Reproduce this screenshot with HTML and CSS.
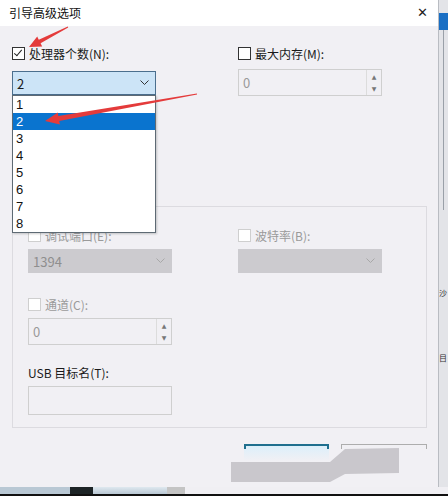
FILE: index.html
```html
<!DOCTYPE html>
<html lang="zh-CN">
<head>
    <meta charset="UTF-8">
    <title>引导高级选项</title>
    <link rel="stylesheet" href="styles.css">
</head>
<body>
    <div class="screen">
        <div class="dialog">
            <div class="titlebar">
                <span class="title">引导高级选项</span>
                <span class="close">✕</span>
            </div>

            <div class="dialog-body">
                <div class="top-row">
                    <div class="field">
                        <label class="check-label"><span class="box checked"></span>处理器个数(N):</label>
                        <div class="select-wrap">
                            <div class="select open">
                                <span>2</span>
                                <svg class="chevron" width="9" height="6" viewBox="0 0 9 6"><path d="M0.5 0.5 L4.5 4.5 L8.5 0.5" fill="none" stroke="#333" stroke-width="1"/></svg>
                            </div>
                            <ul class="dropdown">
                                <li>1</li>
                                <li class="active">2</li>
                                <li>3</li>
                                <li>4</li>
                                <li>5</li>
                                <li>6</li>
                                <li>7</li>
                                <li>8</li>
                            </ul>
                        </div>
                    </div>
                    <div class="field">
                        <label class="check-label"><span class="box"></span>最大内存(M):</label>
                        <div class="spin spin-top">
                            <span class="spin-value">0</span>
                            <div class="spin-btns">
                                <span>▲</span>
                                <span>▼</span>
                            </div>
                        </div>
                    </div>
                </div>

                <div class="group">
                    <div class="group-grid">
                        <div class="field">
                            <label class="check-label muted"><span class="box off"></span>调试端口(E):</label>
                            <div class="select disabled">
                                <span>1394</span>
                                <svg class="chevron" width="9" height="6" viewBox="0 0 9 6"><path d="M0.5 0.5 L4.5 4.5 L8.5 0.5" fill="none" stroke="#a8a8a8" stroke-width="1"/></svg>
                            </div>
                        </div>
                        <div class="field">
                            <label class="check-label muted"><span class="box off"></span>波特率(B):</label>
                            <div class="select disabled">
                                <span></span>
                                <svg class="chevron" width="9" height="6" viewBox="0 0 9 6"><path d="M0.5 0.5 L4.5 4.5 L8.5 0.5" fill="none" stroke="#a8a8a8" stroke-width="1"/></svg>
                            </div>
                        </div>
                        <div class="field row-2">
                            <label class="check-label muted"><span class="box off"></span>通道(C):</label>
                            <div class="spin">
                                <span class="spin-value">0</span>
                                <div class="spin-btns">
                                    <span>▲</span>
                                    <span>▼</span>
                                </div>
                            </div>
                        </div>
                        <div></div>
                        <div class="field row-3">
                            <label class="plain-label">USB 目标名(T):</label>
                            <div class="textbox"></div>
                        </div>
                    </div>
                </div>

                <div class="buttons">
                    <div class="btn btn-default"></div>
                    <div class="btn"></div>
                </div>
            </div>
        </div>

        <div class="behind">
            <div class="behind-bar"></div>
            <div class="behind-line"></div>
            <span class="behind-text t1">沙</span>
            <span class="behind-text t2">目</span>
        </div>
    </div>

    <div class="taskbar">
        <div class="task-light"></div>
        <div class="task-grey"></div>
    </div>

    <!-- пометки поверх скриншота -->
    <svg class="marks" width="448" height="496" viewBox="0 0 448 496">
        <polygon fill="#c9c7cc" points="231,462 330,462 345,449 399,448 399,473 345,474 330,482 231,482"/>
        <polygon fill="#e43b3b" points="67.8,26.6 38.8,39.7 37.2,36.6 29,47 42.2,46.4 40.6,43.3 68.2,27.4"/>
        <polygon fill="#e43b3b" points="196.9,93.5 58.4,116.1 57.8,112.6 45,121 59.9,124.5 59.2,121.0 197.1,94.5"/>
    </svg>
</body>
</html>
```

FILE: styles.css
```css
body {
    margin: 0;
    padding: 0;
    width: 448px;
    height: 496px;
    overflow: hidden;
    background-color: #1a1a1a;
    font-family: 'Noto Sans CJK SC', 'Noto Sans', sans-serif;
    font-size: 12px;
    color: #1a1a1a;
    position: relative;
}

.screen {
    display: flex;
    height: 487px;
}

.dialog {
    width: 438px;
    border-right: 1px solid #b9bcc2;
    background-color: #f1f0f4;
    display: flex;
    flex-direction: column;
}

.titlebar {
    height: 26px;
    box-sizing: border-box;
    background-color: #ffffff;
    display: flex;
    justify-content: space-between;
    align-items: center;
    padding: 0 10px 2px 9px;
}

.title {
    font-size: 12px;
    color: #111;
}

.close {
    font-size: 13px;
    color: #222;
    font-family: 'DejaVu Sans', sans-serif;
}

.dialog-body {
    padding: 21px 0 0 12px;
    position: relative;
}

.top-row {
    display: grid;
    grid-template-columns: 144px 144px;
    column-gap: 82px;
}

.field {
    display: flex;
    flex-direction: column;
}

.check-label {
    display: flex;
    align-items: center;
    height: 13px;
    line-height: 13px;
    margin-bottom: 11px;
    white-space: nowrap;
}

.group .check-label {
    margin-bottom: 7px;
}

.muted {
    color: #9a9a9a;
}

.box {
    width: 11px;
    height: 11px;
    border: 1px solid #333;
    background: #fff;
    margin-right: 4px;
    position: relative;
    flex-shrink: 0;
}

.box.off {
    border-color: #cfcfcf;
}

.box.checked::after {
    content: '';
    position: absolute;
    left: 3px;
    top: 0px;
    width: 3px;
    height: 7px;
    border: solid #222;
    border-width: 0 1.5px 1.5px 0;
    transform: rotate(40deg);
}

.select-wrap {
    position: relative;
}

.select {
    height: 24px;
    box-sizing: border-box;
    border: 1px solid #7a7a7a;
    display: flex;
    align-items: center;
    justify-content: space-between;
    padding: 0 6px 0 4px;
    font-size: 13px;
}

.select.open {
    background-color: #cce4f7;
    border-color: #4b6f8e;
}

.select.disabled {
    background-color: #cccbcf;
    border-color: #cccbcf;
    color: #8e8e8e;
}

.dropdown {
    position: absolute;
    top: 24px;
    left: 0;
    width: 144px;
    box-sizing: border-box;
    margin: 0;
    padding: 0;
    list-style: none;
    background-color: #fff;
    border: 1px solid #5e6a74;
    box-shadow: 1px 1px 2px rgba(0, 0, 0, 0.2);
    z-index: 5;
}

.dropdown li {
    height: 17px;
    line-height: 17px;
    padding-left: 3px;
    font-family: 'Liberation Sans', sans-serif;
    font-size: 13px;
    color: #111;
}

.dropdown li.active {
    background-color: #0a74cf;
    color: #fff;
}

.spin {
    height: 27px;
    box-sizing: border-box;
    border: 1px solid #cfcfcf;
    display: flex;
    align-items: stretch;
    justify-content: space-between;
}

.spin-top {
    margin-top: -2px;
}

.spin-value {
    padding-left: 4px;
    line-height: 25px;
    font-size: 13px;
    color: #9a9a9a;
}

.spin-btns {
    width: 14px;
    border-left: 1px solid #dcdcdc;
    display: flex;
    flex-direction: column;
    justify-content: space-around;
    align-items: center;
    font-size: 6px;
    color: #777;
    font-family: 'DejaVu Sans', sans-serif;
}

.group {
    margin-top: 110px;
    width: 415px;
    height: 222px;
    box-sizing: border-box;
    border: 1px solid #dcdbe0;
    padding: 22px 15px 0;
}

.group-grid {
    display: grid;
    grid-template-columns: 144px 144px;
    column-gap: 66px;
}

.row-2 {
    margin-top: 25px;
}

.row-3 {
    margin-top: 21px;
}

.plain-label {
    height: 13px;
    line-height: 13px;
    margin-bottom: 7px;
}

.textbox {
    height: 29px;
    box-sizing: border-box;
    border: 1px solid #cfcfcf;
}

.buttons {
    display: flex;
    justify-content: flex-end;
    gap: 12px;
    margin-top: 16px;
    width: 415px;
}

.btn {
    width: 86px;
    height: 23px;
    box-sizing: border-box;
    border-top: 1px solid #adadad;
    position: relative;
}

.btn::before,
.btn::after {
    content: '';
    position: absolute;
    top: 0;
    width: 1px;
    height: 4px;
    background-color: #adadad;
}

.btn::before {
    left: 0;
}

.btn::after {
    right: 0;
}

.btn-default {
    width: 85px;
    border-top: 2px solid #1f6f8e;
    background: linear-gradient(#dceffa, #f1f0f4 70%);
}

.btn-default::before,
.btn-default::after {
    width: 2px;
    height: 3px;
    background-color: #1f6f8e;
}

.behind {
    flex: 1;
    background-color: #e3e4e8;
    position: relative;
    overflow: hidden;
}

.behind-bar {
    margin-top: 13px;
    height: 17px;
    background-color: #1a6fc4;
}

.behind-line {
    height: 180px;
    border-right: 1px solid #9aa0a8;
    width: 4px;
}

.behind-text {
    position: absolute;
    left: 0;
    font-size: 8px;
    line-height: 10px;
    color: #333;
}

.t1 {
    top: 288px;
}

.t2 {
    top: 353px;
}

.taskbar {
    height: 9px;
    display: flex;
    background-color: #f0eff3;
    border-bottom: 2px solid #111;
    box-sizing: border-box;
}

.task-light {
    width: 167px;
    background: linear-gradient(#dfe8ef, #b9c8d4);
    border-left: 70px solid #b9c8d4;
    box-sizing: border-box;
    position: relative;
}

.task-light::before {
    content: '';
    position: absolute;
    left: 0;
    top: 0;
    width: 23px;
    height: 7px;
    background-color: #1d2426;
}

.task-grey {
    width: 18px;
    background-color: #c4c4c4;
}

.marks {
    position: absolute;
    left: 0;
    top: 0;
    pointer-events: none;
    z-index: 10;
}
```
